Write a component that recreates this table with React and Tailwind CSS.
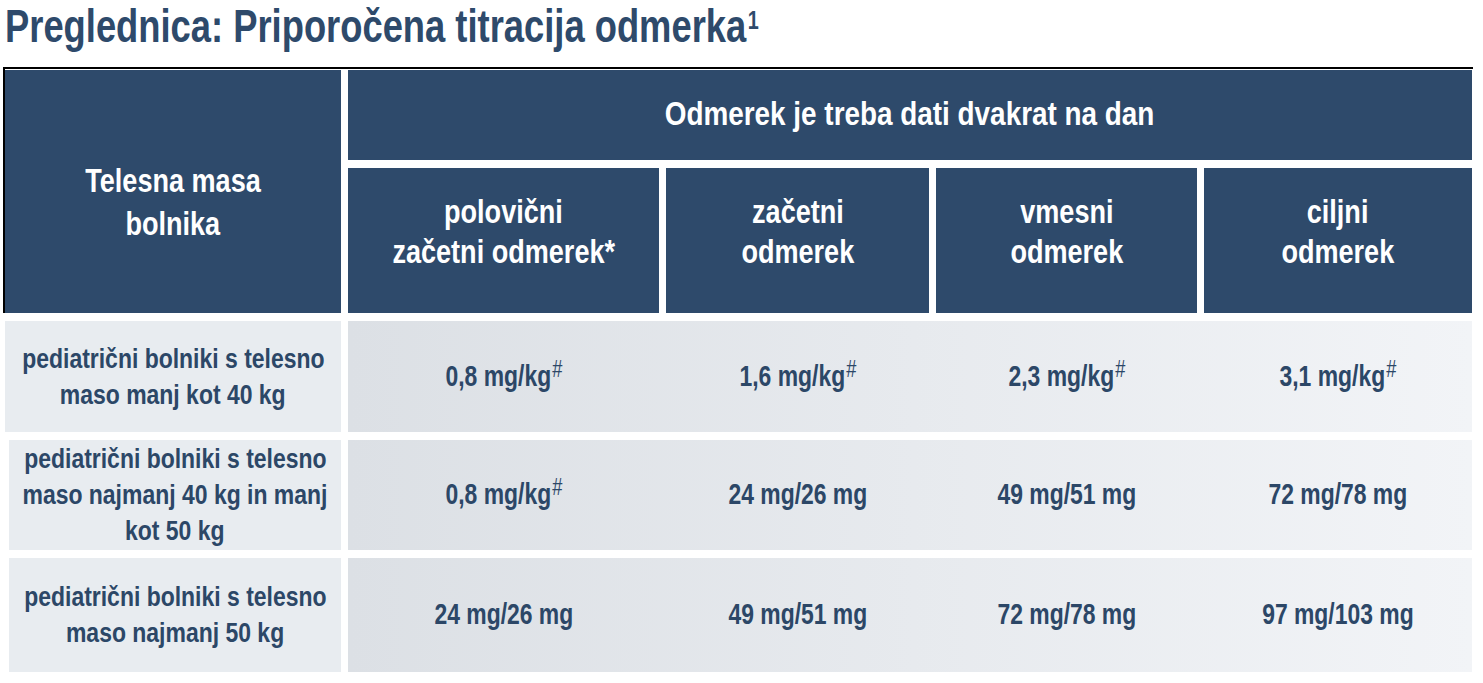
const cols = "grid grid-cols-[336px_311px_263px_261px_268px] gap-x-[7px]";
const inner = "grid grid-cols-[311px_263px_261px_268px] gap-x-[7px]";

const rows = [
  {
    label: ["pediatrični bolniki s telesno", "maso manj kot 40 kg"],
    values: [
      ["0,8 mg/kg", true],
      ["1,6 mg/kg", true],
      ["2,3 mg/kg", true],
      ["3,1 mg/kg", true],
    ],
    h: "h-[111px]",
    first: true,
  },
  {
    label: ["pediatrični bolniki s telesno", "maso najmanj 40 kg in manj", "kot 50 kg"],
    values: [
      ["0,8 mg/kg", true],
      ["24 mg/26 mg", false],
      ["49 mg/51 mg", false],
      ["72 mg/78 mg", false],
    ],
    h: "h-[110px]",
  },
  {
    label: ["pediatrični bolniki s telesno", "maso najmanj 50 kg"],
    values: [
      ["24 mg/26 mg", false],
      ["49 mg/51 mg", false],
      ["72 mg/78 mg", false],
      ["97 mg/103 mg", false],
    ],
    h: "h-[114px]",
  },
];

// condensed look: the page has no narrow font, so squeeze the glyphs
function Narrow({ children, className = "scale-x-[0.82] origin-center" }) {
  return (
    <span className={`inline-block whitespace-nowrap ${className}`}>
      {children}
    </span>
  );
}

function HeadCell({
  lines,
  className = "",
  size = "text-[33px]",
  leading = "leading-[40px]",
}) {
  return (
    <div
      className={`bg-[#2e4a6b] text-white flex flex-col items-center justify-center text-center ${size} ${leading} font-bold ${className}`}
    >
      {lines.map((l) => (
        <Narrow key={l}>{l}</Narrow>
      ))}
    </div>
  );
}

export default function App() {
  return (
    <div className="w-[1483px] h-[683px] bg-white font-['Liberation_Sans',Arial,sans-serif] text-[#2c4767] overflow-hidden">
      <div className="h-[67px] pl-[5px] pt-[3px]">
        <h1 className="text-[46px] leading-[46px] font-bold text-[#2e4a6b]">
          <Narrow className="scale-x-[0.79] origin-left">
            Preglednica: Priporočena titracija odmerka
            <sup className="text-[25px] -top-[13px] ml-[2px]">1</sup>
          </Narrow>
        </h1>
      </div>

      <div className="ml-[3px] w-[1470px] border-t-2 border-l-2 border-black">
        <div className={`${cols} grid-rows-[90px_145px] gap-y-[8px] pt-[1px]`}>
          <HeadCell
            lines={["Telesna masa", "bolnika"]}
            className="row-span-2 pt-5"
            leading="leading-[43px]"
          />
          <HeadCell
            lines={["Odmerek je treba dati dvakrat na dan"]}
            className="col-span-4 pb-1"
            size="text-[34px]"
          />
          <HeadCell lines={["polovični", "začetni odmerek*"]} className="pb-[18px]" />
          <HeadCell lines={["začetni", "odmerek"]} className="pb-[18px]" />
          <HeadCell lines={["vmesni", "odmerek"]} className="pb-[18px]" />
          <HeadCell lines={["ciljni", "odmerek"]} className="pb-[18px]" />
        </div>
      </div>

      <div className="ml-[5px] mt-[8px] flex flex-col gap-y-[8px]">
        {rows.map((r, i) => (
          <div key={i} className={`${cols} ${r.h}`}>
            <div
              className={`bg-[#e8ecf0] flex flex-col items-center justify-center text-center text-[28px] leading-[36px] font-bold ${
                r.first ? "" : "ml-[4px]"
              }`}
            >
              {r.label.map((l) => (
                <Narrow key={l}>{l}</Narrow>
              ))}
            </div>
            <div
              className={`col-span-4 ${inner} bg-gradient-to-r from-[#dce0e5] to-[#f2f4f7]`}
            >
              {r.values.map(([v, hash], j) => (
                <div
                  key={j}
                  className="flex items-center justify-center text-[29px] font-bold"
                >
                  <Narrow className="scale-x-[0.79] origin-center">
                    {v}
                    {hash && (
                      <sup className="text-[23px] italic font-normal -top-[9px] ml-[1px]">
                        #
                      </sup>
                    )}
                  </Narrow>
                </div>
              ))}
            </div>
          </div>
        ))}
      </div>
    </div>
  );
}
